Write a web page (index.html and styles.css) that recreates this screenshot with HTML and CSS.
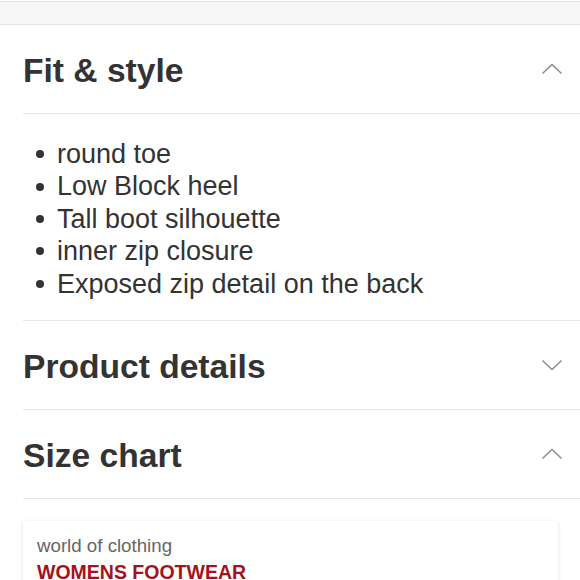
FILE: index.html
```html
<!DOCTYPE html>
<html lang="en">
<head>
<meta charset="utf-8">
<title>Fit &amp; style</title>
<link rel="stylesheet" href="styles.css">
</head>
<body>
<div class="topbar"></div>
<main class="content">
  <section class="acc">
    <div class="acc-head">
      <h2 class="acc-title">Fit &amp; style</h2>
      <svg class="chev" width="22" height="12" viewBox="0 0 22 12"><polyline points="1.5,10.5 11,1.5 20.5,10.5"/></svg>
    </div>
    <ul class="features">
      <li>round toe</li>
      <li>Low Block heel</li>
      <li>Tall boot silhouette</li>
      <li>inner zip closure</li>
      <li>Exposed zip detail on the back</li>
    </ul>
  </section>
  <section class="acc">
    <div class="acc-head">
      <h2 class="acc-title">Product details</h2>
      <svg class="chev" width="22" height="12" viewBox="0 0 22 12"><polyline points="1.5,1.5 11,10.5 20.5,1.5"/></svg>
    </div>
  </section>
  <section class="acc">
    <div class="acc-head">
      <h2 class="acc-title">Size chart</h2>
      <svg class="chev" width="22" height="12" viewBox="0 0 22 12"><polyline points="1.5,10.5 11,1.5 20.5,10.5"/></svg>
    </div>
  </section>
  <div class="card">
    <div class="card-sub">world of clothing</div>
    <div class="card-title">WOMENS FOOTWEAR</div>
  </div>
</main>
</body>
</html>
```

FILE: styles.css
```css
html, body {
  margin: 0;
  padding: 0;
  background: #ffffff;
  font-family: "Liberation Sans", Arial, sans-serif;
  color: #333333;
}

.topbar {
  height: 22px;
  margin-top: 1px;
  background: #f6f6f6;
  border-top: 1px solid #e4e4e4;
  border-bottom: 1px solid #e4e4e4;
}

.content {
  padding-left: 23px;
}

.acc-head {
  height: 88px;
  display: flex;
  align-items: center;
  justify-content: space-between;
  border-bottom: 1px solid #e6e6e6;
}

.acc-title {
  margin: 0;
  padding-top: 3px;
  font-size: 33.6px;
  line-height: 1;
  font-weight: bold;
  color: #333333;
}

.chev {
  flex: none;
  margin-right: 17px;
  fill: none;
  stroke: #8c8c8c;
  stroke-width: 1.5;
}

.features {
  list-style: none;
  margin: 0;
  padding: 24px 0 20px 0;
  border-bottom: 1px solid #e6e6e6;
}

.features li {
  display: flex;
  align-items: center;
  font-size: 27px;
  line-height: 32.4px;
  color: #333333;
}

.features li::before {
  content: "";
  flex: none;
  width: 8px;
  height: 8px;
  border-radius: 50%;
  background: #333333;
  margin-left: 13px;
  margin-right: 13px;
}

.card {
  margin-top: 22px;
  margin-right: 22px;
  padding: 14px 14px 10px 14px;
  background: #ffffff;
  box-shadow: 0 1px 4px rgba(0, 0, 0, 0.12);
}

.card-sub {
  font-size: 18.7px;
  line-height: 22px;
  color: #666666;
}

.card-title {
  margin-top: 4px;
  font-size: 19.5px;
  line-height: 22px;
  font-weight: bold;
  color: #a8111a;
}
```
